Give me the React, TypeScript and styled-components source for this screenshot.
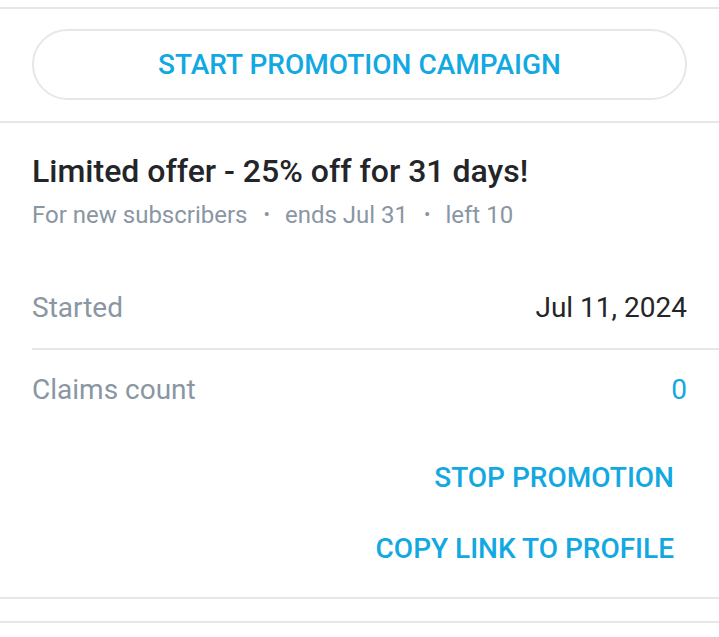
import React from "react";
import styled, { createGlobalStyle } from "styled-components";

const GlobalStyle = createGlobalStyle`
  html, body {
    margin: 0;
    padding: 0;
    background: #fff;
  }
  body {
    font-family: Roboto, "Noto Sans", sans-serif;
    -webkit-font-smoothing: antialiased;
  }
`;

const BLUE = "#12a8e2";
const GRAY = "#8a96a3";
const DARK = "#242529";
const LINE = "#e6e7e8";

const Page = styled.div`
  padding-top: 7px;
  display: flex;
  flex-direction: column;
`;

const Rule = styled.div<{ $inset?: number }>`
  height: 2px;
  background: ${LINE};
  margin-left: ${(p) => p.$inset ?? 0}px;
`;

const CampaignSection = styled.div`
  padding: 20px 32px 21px;
`;

const PillButton = styled.button`
  width: 100%;
  height: 71px;
  border: 2px solid ${LINE};
  border-radius: 36px;
  background: #fff;
  color: ${BLUE};
  font-family: Roboto, sans-serif;
  font-weight: 500;
  font-size: 28px;
  text-transform: uppercase;
  cursor: pointer;
`;

const Offer = styled.div`
  padding: 28px 32px 0;
  display: flex;
  flex-direction: column;
`;

const Title = styled.div`
  color: ${DARK};
  font-size: 32px;
  font-weight: 500;
  line-height: 40px;
`;

const Meta = styled.div`
  margin-top: 9px;
  display: flex;
  align-items: center;
  color: ${GRAY};
  font-size: 24px;
  line-height: 30px;
`;

const Dot = styled.span`
  margin: 0 15px 0 16px;
  font-size: 19px;
`;

const Details = styled.div`
  margin-top: 38px;
`;

const InfoRow = styled.div`
  display: flex;
  justify-content: space-between;
  align-items: center;
  padding: 23px 32px;
  font-size: 28px;
  line-height: 34px;
`;

const Label = styled.span`
  color: ${GRAY};
`;

const Value = styled.span<{ $accent?: boolean }>`
  color: ${(p) => (p.$accent ? BLUE : DARK)};
`;

const Actions = styled.div`
  display: flex;
  flex-direction: column;
  align-items: flex-end;
  padding: 13px 32px 13px;
  gap: 1px;
`;

const TextButton = styled.button`
  background: none;
  border: none;
  color: ${BLUE};
  font-family: Roboto, sans-serif;
  font-weight: 500;
  font-size: 28px;
  line-height: 34px;
  padding: 18px 13px;
  text-transform: uppercase;
  cursor: pointer;
`;

const Gap = styled.div`
  height: 22px;
`;

export default function App() {
  return (
    <>
      <GlobalStyle />
      <Page>
        <Rule />
        <CampaignSection>
          <PillButton>Start promotion campaign</PillButton>
        </CampaignSection>
        <Rule />
        <Offer>
          <Title>Limited offer - 25% off for 31 days!</Title>
          <Meta>
            For new subscribers
            <Dot>•</Dot>
            ends Jul 31
            <Dot>•</Dot>
            left 10
          </Meta>
        </Offer>
        <Details>
          <InfoRow>
            <Label>Started</Label>
            <Value>Jul 11, 2024</Value>
          </InfoRow>
          <Rule $inset={32} />
          <InfoRow>
            <Label>Claims count</Label>
            <Value $accent>0</Value>
          </InfoRow>
        </Details>
        <Actions>
          <TextButton>Stop promotion</TextButton>
          <TextButton>Copy link to profile</TextButton>
        </Actions>
        <Rule />
        <Gap />
        <Rule />
      </Page>
    </>
  );
}
